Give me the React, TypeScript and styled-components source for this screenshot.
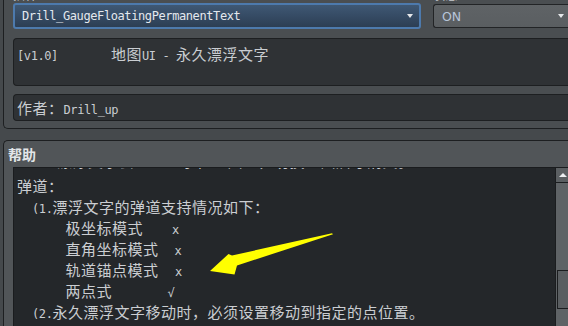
import React from 'react';
import styled, { createGlobalStyle } from 'styled-components';

const cjk = `"Noto Sans CJK SC", "Noto Sans", sans-serif`;
const mono = `"DejaVu Sans Mono", "Liberation Mono", monospace`;

const GlobalStyle = createGlobalStyle`
    html, body {
        margin: 0;
        padding: 0;
        background: #45494c;
        overflow: hidden;
    }
    #root {
        width: 568px;
        height: 326px;
    }
`;

const Window = styled.div`
    width: 568px;
    height: 326px;
    box-sizing: border-box;
    overflow: hidden;
    padding-left: 3px;
    display: flex;
    flex-direction: column;
    gap: 11px;
    background: #45494c;
    font-family: ${cjk};
    font-size: 15px;
    letter-spacing: 0.5px;
    color: #c9cdd1;
`;

const TopPanel = styled.section`
    flex: none;
    margin-right: -10px;
    padding: 0 0 7px 9px;
    display: flex;
    flex-direction: column;
    background: #4a4e51;
    border: 1px solid #1d1f21;
    border-top: none;
    border-right: none;
    border-radius: 0 0 0 5px;
`;

const LabelRow = styled.div`
    display: flex;
    gap: 12px;
    height: 15px;
    margin-top: -13px;
    font-size: 12px;
    line-height: 15px;
    color: #c8ccd0;
`;

const Label = styled.span<{ $width?: number }>`
    width: ${(p) => (p.$width ? `${p.$width}px` : 'auto')};
    flex: none;
`;

const FieldRow = styled.div`
    display: flex;
    align-items: center;
    gap: 12px;
    margin-top: 1px;
    height: 26px;
`;

const PluginSelect = styled.div`
    width: 408px;
    height: 26px;
    box-sizing: border-box;
    flex: none;
    display: flex;
    align-items: center;
    justify-content: space-between;
    padding: 0 6px 0 7px;
    border: 2px solid #4d7aad;
    border-radius: 3px;
    background: linear-gradient(#3f5874, #2c3e54);
    font-family: ${mono};
    font-size: 12px;
    letter-spacing: -0.4px;
    color: #e4e8ee;
`;

const StateSelect = styled.div`
    flex: 1;
    height: 24px;
    box-sizing: border-box;
    display: flex;
    align-items: center;
    justify-content: space-between;
    padding: 0 14px 0 8px;
    border: 1px solid #222426;
    border-right: none;
    border-radius: 3px 0 0 3px;
    background: linear-gradient(#5f6366, #5a5e61);
    font-family: "DejaVu Sans", "Liberation Sans", sans-serif;
    font-size: 12.5px;
    letter-spacing: 0;
    color: #b7c5da;
`;

const Caret = styled.span`
    width: 0;
    height: 0;
    border-left: 3.5px solid transparent;
    border-right: 3.5px solid transparent;
    border-top: 4px solid #e6e8ea;
`;

const TextBox = styled.div<{ $height: number; $gap: number; $padTop: number }>`
    height: ${(p) => p.$height}px;
    margin-top: ${(p) => p.$gap}px;
    box-sizing: border-box;
    padding: ${(p) => p.$padTop}px 3px 0;
    background: #2f3235;
    border: 1px solid #1d1f21;
    border-right: none;
    border-radius: 4px 0 0 4px;
    line-height: 21px;
    white-space: pre;
`;

const En = styled.span<{ $gap?: number }>`
    font-family: ${mono};
    font-size: 12px;
    letter-spacing: -0.4px;
    margin-left: ${(p) => p.$gap ?? 0}px;
`;

const HelpPanel = styled.section`
    flex: 1;
    min-height: 0;
    margin-right: -10px;
    display: flex;
    flex-direction: column;
    background: #515558;
    border: 1px solid #1d1f21;
    border-right: none;
    border-bottom: none;
    border-radius: 5px 0 0 0;
`;

const HelpTitle = styled.div`
    height: 26px;
    padding-left: 4px;
    font-size: 14px;
    font-weight: 700;
    letter-spacing: 0;
    line-height: 26px;
    color: #e2e5e8;
`;

const TextArea = styled.div`
    flex: 1;
    min-height: 0;
    margin: 0 9px 0 9px;
    display: flex;
    background: #24272a;
    border-top: 1px solid #1a1c1e;
    border-left: 1px solid #1a1c1e;
`;

const TextContent = styled.div`
    flex: 1;
    position: relative;
    overflow: hidden;
    padding-left: 3px;
`;

const Lines = styled.div`
    margin-top: -14px;
`;

const Line = styled.div<{ $indent?: number; $lh?: number }>`
    height: 21px;
    line-height: ${(p) => p.$lh ?? 21}px;
    padding-left: ${(p) => p.$indent ?? 0}px;
    white-space: pre;
    color: #cbced2;
`;

const Arrow = styled.svg`
    position: absolute;
    left: 0;
    top: 0;
    pointer-events: none;
`;

const Scrollbar = styled.div`
    width: 13px;
    flex: none;
    display: flex;
    flex-direction: column;
    background: #5f6366;
    border-left: 1px solid #1b1d1f;
`;

const ScrollButton = styled.div`
    height: 14px;
    display: flex;
    align-items: center;
    justify-content: center;
    background: #5b5f62;
    border-bottom: 1px solid #1b1d1f;
`;

const UpCaret = styled.span`
    width: 0;
    height: 0;
    border-left: 4px solid transparent;
    border-right: 4px solid transparent;
    border-bottom: 4px solid #eceef0;
`;

const Thumb = styled.div<{ $offset: number }>`
    margin-top: ${(p) => p.$offset}px;
    margin-left: 1px;
    height: 39px;
    box-sizing: border-box;
    background: #5a5e61;
    border: 1px solid #1b1d1f;
    border-right: none;
`;

const modes = [
    { name: '极坐标模式', gap: 29, mark: 'x' },
    { name: '直角坐标模式', gap: 16, mark: 'x' },
    { name: '轨道锚点模式', gap: 16.5, mark: 'x' },
    { name: '两点式', gap: 55.5, mark: '√' },
];

export default function App() {
    return (
        <>
            <GlobalStyle />
            <Window>
                <TopPanel>
                    <LabelRow>
                        <Label $width={408}>插件</Label>
                        <Label>状态</Label>
                    </LabelRow>
                    <FieldRow>
                        <PluginSelect>
                            <span>Drill_GaugeFloatingPermanentText</span>
                            <Caret />
                        </PluginSelect>
                        <StateSelect>
                            <span>ON</span>
                            <Caret />
                        </StateSelect>
                    </FieldRow>
                    <TextBox $height={48} $gap={9} $padTop={4}>
                        <En>[v1.0]</En>
                        <span style={{ marginLeft: 53 }}>地图</span>
                        <En>UI - </En>
                        永久漂浮文字
                    </TextBox>
                    <TextBox $height={27} $gap={8} $padTop={2}>
                        作者：<En>Drill_up</En>
                    </TextBox>
                </TopPanel>
                <HelpPanel>
                    <HelpTitle>帮助</HelpTitle>
                    <TextArea>
                        <TextContent>
                            <Lines>
                                <Line $indent={40} $lh={13}>漂浮文字会一直显示在地图上，切换地图后才消失。</Line>
                                <Line>弹道：</Line>
                                <Line $indent={15}>
                                    <En>(1.</En>漂浮文字的弹道支持情况如下：
                                </Line>
                                {modes.map((m) => (
                                    <Line key={m.name} $indent={48.5}>
                                        {m.name}
                                        <En $gap={m.gap}>{m.mark}</En>
                                    </Line>
                                ))}
                                <Line $indent={15}>
                                    <En>(2.</En>永久漂浮文字移动时，必须设置移动到指定的点位置。
                                </Line>
                            </Lines>
                            <Arrow width="330" height="120" viewBox="0 0 330 120">
                                <polygon
                                    fill="#ffff00"
                                    points="196,103 214.5,86 218,87.5 318,65.3 319,66.2 223,97.5 220.5,106.5"
                                />
                            </Arrow>
                        </TextContent>
                        <Scrollbar>
                            <ScrollButton>
                                <UpCaret />
                            </ScrollButton>
                            <Thumb $offset={87} />
                        </Scrollbar>
                    </TextArea>
                </HelpPanel>
            </Window>
        </>
    );
}
